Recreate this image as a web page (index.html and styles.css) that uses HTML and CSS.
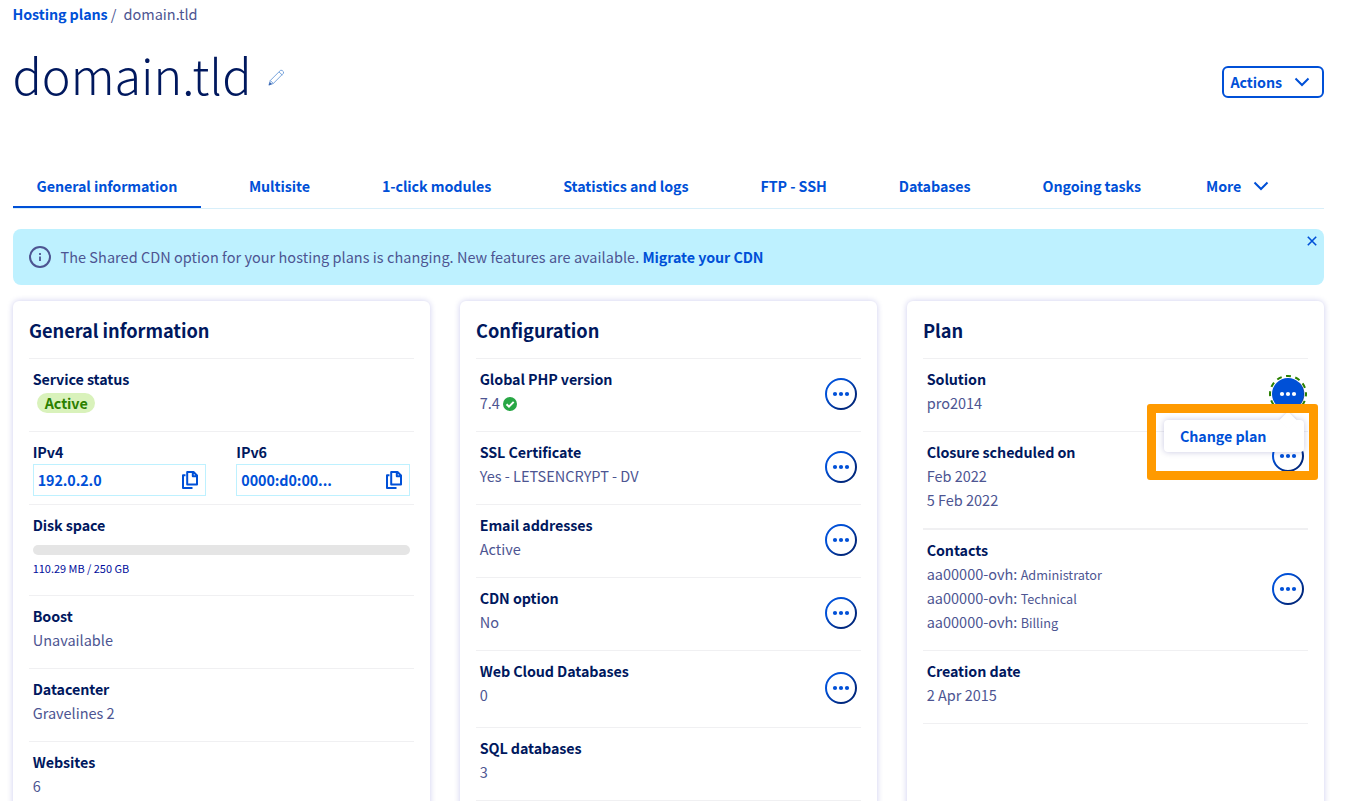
FILE: index.html
```html
<!DOCTYPE html>
<html lang="en">
<head>
<meta charset="utf-8">
<title>domain.tld - Hosting plans</title>
<link rel="stylesheet" href="styles.css">
</head>
<body>
<svg class="defs" width="0" height="0" aria-hidden="true">
  <defs>
    <linearGradient id="ring" x1="0" y1="0" x2="1" y2="1"><stop offset="0.3" stop-color="#0050d7"/><stop offset="0.75" stop-color="#00287f"/></linearGradient>
    <symbol id="more" viewBox="0 0 32 32"><circle cx="16" cy="16" r="15" fill="#fff" stroke="url(#ring)" stroke-width="2"/><g fill="#0050d7"><circle cx="10" cy="16" r="2.1"/><circle cx="16" cy="16" r="2.1"/><circle cx="22" cy="16" r="2.1"/></g></symbol>
    <symbol id="copy" viewBox="0 0 18 20"><path d="M6.2 2h6.3L16 5.500V14.600H6.200zM11.800 2v4.200H16M4.500 5.200H2V18h9.500" fill="none" stroke="#0050d7" stroke-width="2" stroke-linejoin="round"/></symbol>
    <symbol id="chevron" viewBox="0 0 16 10"><path d="M1.500 1.500 8 8l6.500-6.500" fill="none" stroke="#0050d7" stroke-width="2"/></symbol>
  </defs>
</svg>
<div class="page">
  <nav class="breadcrumb"><a class="crumb-link">Hosting plans</a><span class="slash">/</span><span>domain.tld</span></nav>
  <header class="header">
    <h1 class="title">domain.tld</h1>
    <svg class="pencil" viewBox="0 0 17 17"><path d="M1 16l1.300-4.500L12.500 1.300q1.600-.6 3 1.500v1.400L5.300 14.500zM11 2.900l3.300 3.200M2.300 11.500l3 3" fill="none" stroke="#6a9ad8" stroke-width="0.9"/><path d="M.6 16.400l1.200-3.300 2.200 2z" fill="#3b66b0"/></svg>
    <button class="actions">Actions<svg class="chevron"><use href="#chevron"/></svg></button>
  </header>
  <nav class="tabs">
    <a class="tab active">General information</a><a class="tab">Multisite</a><a class="tab">1-click modules</a><a class="tab">Statistics and logs</a><a class="tab">FTP - SSH</a><a class="tab">Databases</a><a class="tab">Ongoing tasks</a><a class="tab tab-more">More<svg class="chevron"><use href="#chevron"/></svg></a>
  </nav>
  <section class="banner">
    <svg class="info" viewBox="0 0 24 24"><circle cx="12" cy="12" r="10" fill="none" stroke="#4d5592" stroke-width="2"/><path d="M12 8v2M12 11.500v4.500" stroke="#4d5592" stroke-width="1.800"/></svg>
    <p class="banner-text">The Shared CDN option for your hosting plans is changing. New features are available. <a class="banner-link">Migrate your CDN</a></p>
    <svg class="close" viewBox="0 0 10 10"><path d="M.8.8l8.400 8.400M9.200.8.800 9.200" stroke="#0050d7" stroke-width="1.600"/></svg>
  </section>
  <main class="cards">
    <section class="card">
      <h2 class="card-title">General information</h2>
      <div class="row"><div><h3>Service status</h3><span class="badge">Active</span></div></div>
      <div class="row ips">
        <div class="ip"><h3>IPv4</h3><div class="ip-box"><span>192.0.2.0</span><svg class="copy"><use href="#copy"/></svg></div></div>
        <div class="ip"><h3>IPv6</h3><div class="ip-box"><span>0000:d0:00...</span><svg class="copy"><use href="#copy"/></svg></div></div>
      </div>
      <div class="row disk"><div class="grow"><h3>Disk space</h3><div class="meter"></div><div class="usage">110.29 MB / 250 GB</div></div></div>
      <div class="row"><div><h3>Boost</h3><p>Unavailable</p></div></div>
      <div class="row"><div><h3>Datacenter</h3><p>Gravelines 2</p></div></div>
      <div class="row"><div><h3>Websites</h3><p>6</p></div></div>
    </section>
    <section class="card">
      <h2 class="card-title">Configuration</h2>
      <div class="row"><div><h3>Global PHP version</h3><p>7.4 <svg class="check" viewBox="0 0 14 14"><circle cx="7" cy="7" r="7" fill="#28a745"/><path d="M3.500 7.200l2.500 2.500 4.700-4.800" fill="none" stroke="#fff" stroke-width="2"/></svg></p></div><svg class="more"><use href="#more"/></svg></div>
      <div class="row"><div><h3>SSL Certificate</h3><p>Yes - LETSENCRYPT - DV</p></div><svg class="more"><use href="#more"/></svg></div>
      <div class="row"><div><h3>Email addresses</h3><p>Active</p></div><svg class="more"><use href="#more"/></svg></div>
      <div class="row"><div><h3>CDN option</h3><p>No</p></div><svg class="more"><use href="#more"/></svg></div>
      <div class="row tall"><div><h3>Web Cloud Databases</h3><p>0</p></div><svg class="more"><use href="#more"/></svg></div>
      <div class="row"><div><h3>SQL databases</h3><p>3</p></div></div>
      <div class="row"></div>
    </section>
    <section class="card plan">
      <h2 class="card-title">Plan</h2>
      <div class="row"><div><h3>Solution</h3><p>pro2014</p></div>
        <svg class="more open" viewBox="0 0 38 38"><circle cx="19" cy="19" r="18" fill="none" stroke="#2b8000" stroke-width="2" stroke-dasharray="5 4.420" stroke-dashoffset="2.500"/><circle cx="19" cy="19" r="16" fill="#0050d7"/><path d="M30.300 7.700A16 16 0 0 1 27 32.900" fill="none" stroke="#00287f" stroke-width="1" opacity=".6"/><g fill="#fff"><circle cx="13" cy="19" r="2.100"/><circle cx="19" cy="19" r="2.100"/><circle cx="25" cy="19" r="2.100"/></g></svg></div>
      <div class="row closure"><div><h3>Closure scheduled on</h3><p>Feb 2022</p><p>5 Feb 2022</p></div><svg class="more"><use href="#more"/></svg></div>
      <div class="row thick"><div><h3>Contacts</h3><p>aa00000-ovh: <small>Administrator</small></p><p>aa00000-ovh: <small>Technical</small></p><p>aa00000-ovh: <small>Billing</small></p></div><svg class="more"><use href="#more"/></svg></div>
      <div class="row"><div><h3>Creation date</h3><p>2 Apr 2015</p></div></div>
      <div class="row"></div>
      <div class="menu">Change plan</div>
      <div class="highlight"></div>
    </section>
  </main>
</div>
</body>
</html>
```

FILE: styles.css
```css
* { box-sizing: border-box; }
body { margin: 0; background: #fff; color: #4d5592; font-family: "Noto Sans CJK SC", "Noto Sans", sans-serif; font-size: 14.5px; line-height: 24px; }
h1, h2, h3, p { margin: 0; }
h3, .crumb-link, .actions, .tab, .banner-link, .badge, .ip-box, .menu { font-size: 14.3px; font-weight: 700; letter-spacing: -0.08px; }
.defs { position: absolute; }
.page { height: 801px; overflow: hidden; padding: 2px 21px 0 13px; white-space: nowrap; }
.breadcrumb { display: flex; height: 25px; margin-left: -0.5px; }
.crumb-link { color: #0050d7; }
.slash { margin: 0 7px 0 3.2px; }
.header { display: flex; height: 138px; align-items: flex-start; }
.title { margin: 11px 0 0 -0.5px; color: #00185e; font-size: 48.5px; line-height: 72px; font-weight: 300; }
.pencil { width: 17px; height: 17px; margin: 42px 0 0 16.5px; }
.actions { display: flex; align-items: center; width: 102px; height: 32px; margin: 39px 0 0 auto; padding: 0 0 1px 6.5px; border: 2px solid #0050d7; border-radius: 6px; background: #fff; color: #0050d7; font-family: inherit; line-height: 24px; }
.chevron { width: 16px; height: 10px; margin-left: 12px; }
.actions .chevron { margin-top: 1px; }
.tabs { display: flex; gap: 24px; height: 44px; border-bottom: 1px solid #d8effa; }
.tab { display: flex; align-items: center; height: 43px; padding: 0 24px; color: #0050d7; border-bottom: 2px solid transparent; }
.tab:first-child { padding: 0 23.7px 0 23.5px; }
.tab-more { padding-left: 17px; }
.active { border-color: #0050d7; }
.banner { display: flex; align-items: center; position: relative; height: 56px; margin-top: 20px; padding-left: 15.2px; border-radius: 8px; background: #bef1ff; }
.banner-text { letter-spacing: 0.03px; }
.info { width: 24px; height: 24px; margin-right: 8.3px; }
.banner-link { color: #0050d7; }
.close { position: absolute; top: 7px; right: 7px; width: 10px; height: 10px; }
.cards { display: grid; grid-template-columns: repeat(3, 1fr); gap: 30px; margin-top: 16px; height: 540px; }
.card { position: relative; padding: 0 16px; border-radius: 6px; background: #fff; box-shadow: 0 0 6px rgba(0, 0, 170, .2); }
.card-title { height: 57px; color: #00185e; font-size: 18.2px; line-height: 58px; font-weight: 700; letter-spacing: -0.03px; }
.row { display: flex; justify-content: space-between; height: 73px; padding: 8px 4px 0 3.7px; border-top: 1px solid #f0f0f2; }
h3 { color: #00185e; }
p { height: 24px; }
.badge { display: block; width: 58px; height: 20px; margin: 2px 0 0 4.5px; border-radius: 10px; background: #d9f2bb; color: #2b8000; line-height: 20px; text-align: center; }
.more { width: 32px; height: 32px; margin-top: 11px; }
.ips { gap: 30px; }
.ip { flex: 1; }
.ip-box { display: flex; justify-content: space-between; align-items: center; height: 32px; padding: 0 6px 0 4px; border: 1px solid #bef1ff; color: #0050d7; }
.copy { width: 18px; height: 20px; }
.disk { height: 91px; }
.grow { flex: 1; }
.meter { height: 10px; margin-top: 8px; border-radius: 5px; background: #e5e5e5; }
.usage { margin-top: 1px; color: #000e9c; font-size: 10.95px; }
.check { width: 14px; height: 14px; vertical-align: -2px; }
.tall { height: 77px; }
.tall .more { margin-top: 13px; }
.open { width: 38px; height: 38px; margin: 8px -3px 0 0; }
.closure { height: 97px; }
.closure .more { margin-top: 0; }
.thick { height: 122px; border-top-width: 2px; }
.thick .more { margin-top: 35px; }
small { font-size: 12.7px; line-height: 1; }
.menu { position: absolute; top: 119px; right: 20px; width: 140px; height: 32px; padding-left: 16px; border-radius: 4px; background: #fff; color: #0050d7; line-height: 32px; box-shadow: 0 0 6px rgba(0, 0, 120, .22); }
.menu::before { content: ""; position: absolute; top: -6px; right: 10px; width: 12px; height: 12px; background: #fff; transform: rotate(45deg); box-shadow: -1px -1px 2px rgba(0, 0, 120, .1); }
.highlight { position: absolute; top: 103px; right: 6px; width: 171px; height: 76px; border: 9px solid #ff9a00; border-radius: 3px; }
```
